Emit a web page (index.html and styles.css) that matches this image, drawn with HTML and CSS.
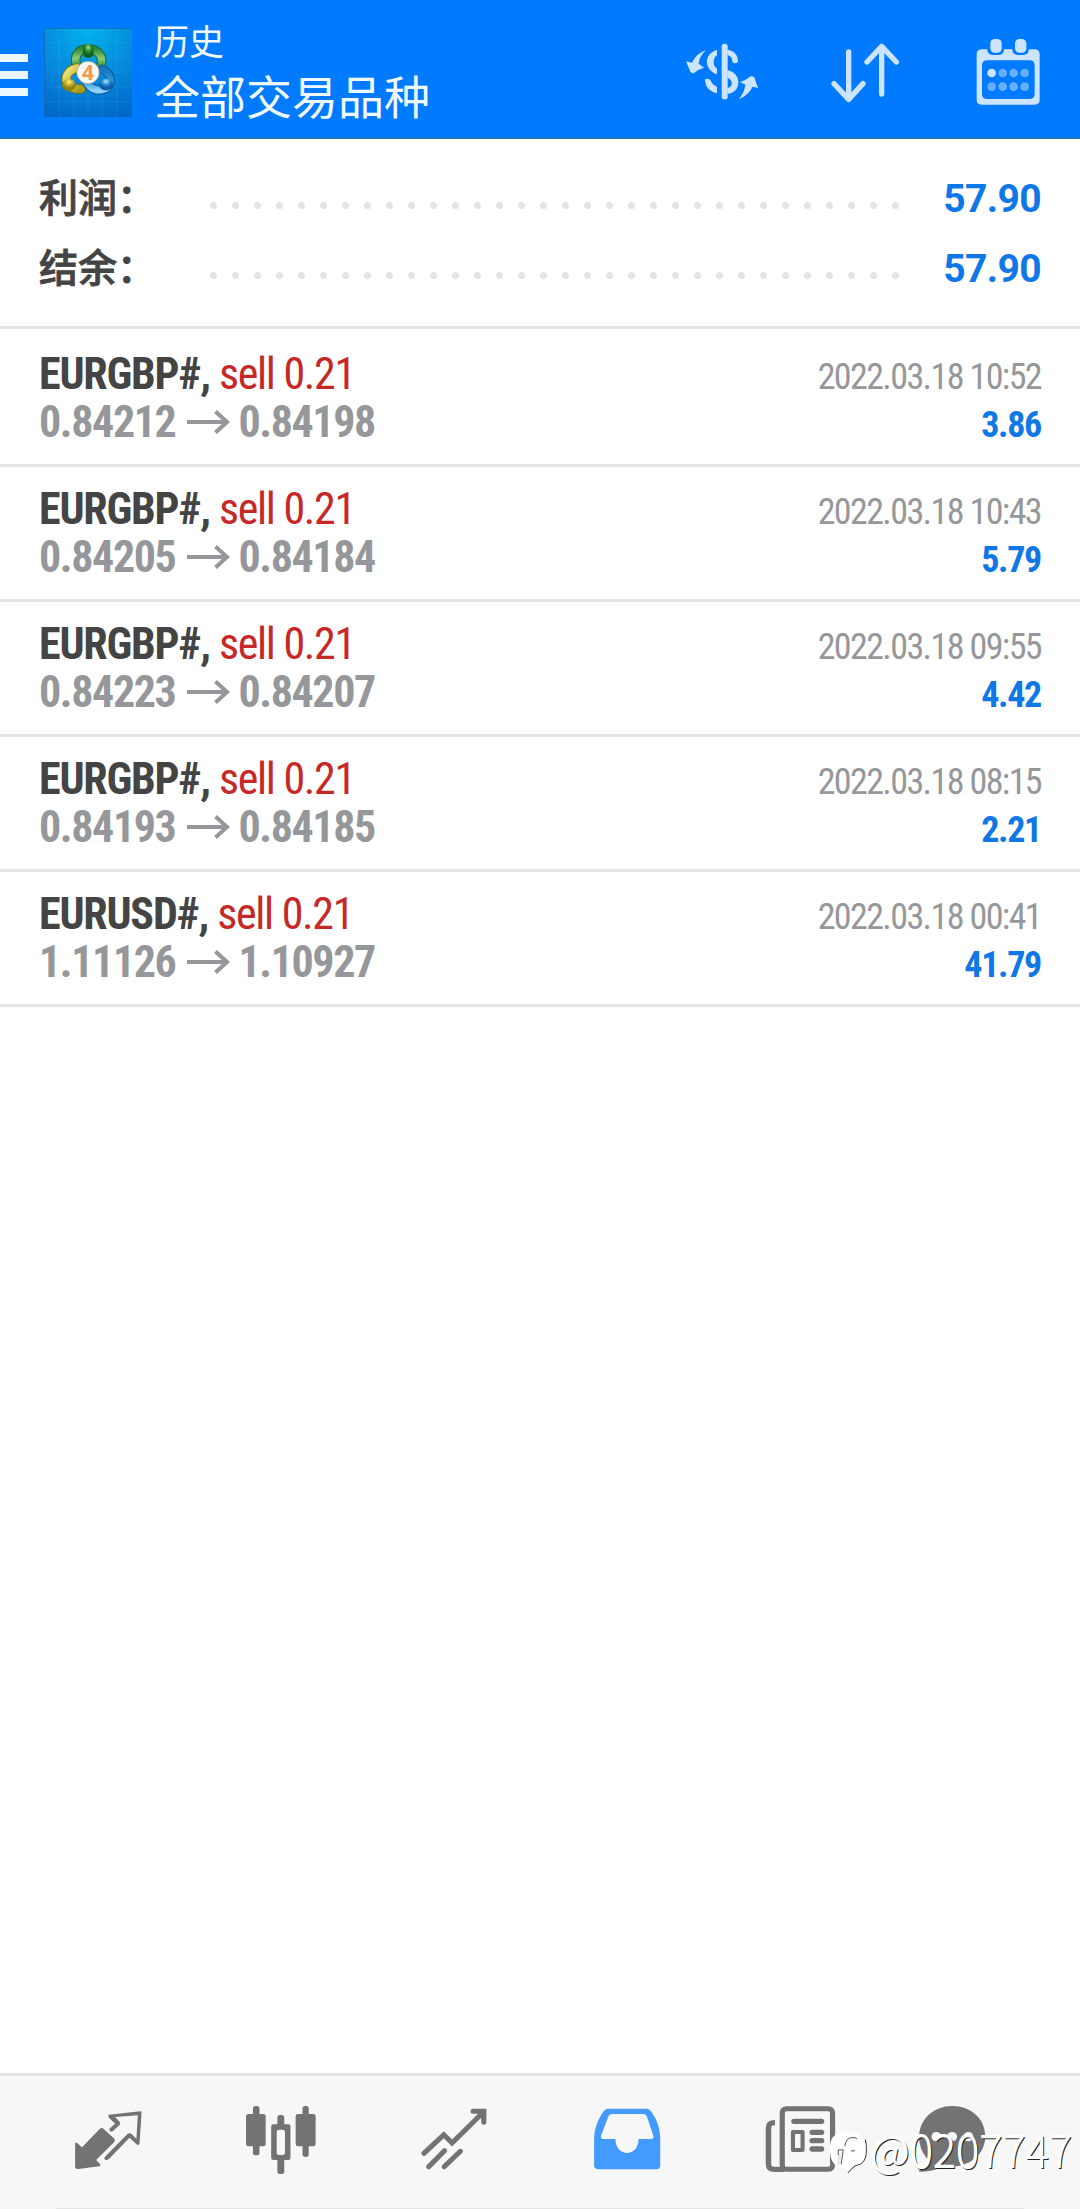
FILE: index.html
```html
<!DOCTYPE html>
<html lang="zh-CN">
<head>
<meta charset="utf-8">
<title>历史</title>
<link rel="stylesheet" href="styles.css">
</head>
<body>
<div class="app">
  <header class="topbar">
    <div class="menu"><span></span><span></span><span></span></div>
    <svg class="logo" viewBox="0 0 88 89">
      <defs>
        <radialGradient id="sky" cx="50%" cy="0%" r="105%"><stop offset="0" stop-color="#00b2ec"/><stop offset=".55" stop-color="#0589dc"/><stop offset="1" stop-color="#0068c8"/></radialGradient>
        <linearGradient id="green" x2="0" y2="1"><stop offset="0" stop-color="#2f8a38"/><stop offset=".5" stop-color="#8acb78"/><stop offset="1" stop-color="#24882e"/></linearGradient>
        <linearGradient id="gold" x2="1" y2="1"><stop offset="0" stop-color="#f3e47c"/><stop offset="1" stop-color="#a99b16"/></linearGradient>
        <linearGradient id="blue" x2="0" y2="1"><stop offset="0" stop-color="#1475be"/><stop offset=".6" stop-color="#2f97db"/><stop offset="1" stop-color="#8bd3f7"/></linearGradient>
        <radialGradient id="gHead" cy="25%"><stop offset="0" stop-color="#a8e598"/><stop offset=".5" stop-color="#35943a"/><stop offset="1" stop-color="#08661b"/></radialGradient>
        <radialGradient id="yHead" cy="25%"><stop offset="0" stop-color="#fff0a0"/><stop offset=".5" stop-color="#c7b62e"/><stop offset="1" stop-color="#8d800c"/></radialGradient>
        <radialGradient id="bHead" cy="25%"><stop offset="0" stop-color="#c2e9ff"/><stop offset=".5" stop-color="#3596d9"/><stop offset="1" stop-color="#0b5dab"/></radialGradient>
      </defs>
      <rect width="88" height="89" fill="url(#sky)"/>
      <path d="M15 0V89M29.500 0V89M44 0V89M58.500 0V89M73 0V89M0 15H88M0 30H88M0 44H88M0 59H88M0 74H88" stroke="#55bdf0" stroke-opacity=".16"/>
      <path d="M.5 89V.5H88" fill="none" stroke="#1268b8" stroke-opacity=".8"/>
      <g stroke-linecap="round" fill="none">
        <path d="M33 39C29 28 34 21 44 21S61 29 56 40" stroke="#176827" stroke-width="9.500"/>
        <path d="M33 39C29 28 34 21 44 21S61 29 56 40" stroke="url(#green)" stroke-width="7.500"/>
        <path d="M33 40C18 43 18 62 37 61" stroke="#807611" stroke-width="9.500"/>
        <path d="M33 40C18 43 18 62 37 61" stroke="url(#gold)" stroke-width="7.500"/>
        <path d="M58 41C71 47 68 61 57 62C49 63 43 57 42 53" stroke="#0b5799" stroke-width="9"/>
        <path d="M58 41C71 47 68 61 57 62C49 63 43 57 42 53" stroke="url(#blue)" stroke-width="7"/>
      </g>
      <rect x="39" y="16" width="10.500" height="14" rx="5" fill="url(#gHead)"/>
      <ellipse cx="25" cy="57" rx="7" ry="6" fill="url(#yHead)"/>
      <ellipse cx="62" cy="56.500" rx="7" ry="6" fill="url(#bHead)"/>
      <circle cx="44" cy="44.500" r="11.200" fill="#f7f7f5" stroke="#9a9a88" stroke-width=".7"/>
      <text x="44" y="51.500" text-anchor="middle" class="logo-digit">4</text>
    </svg>
    <div class="titles">
      <div class="subtitle">历史</div>
      <div class="title">全部交易品种</div>
    </div>
    <div class="actions">
      <svg viewBox="66 95 240 240">
        <g fill="#cce4ff">
          <rect x="185" y="130" width="18" height="167" rx="8"/>
          <path d="M171 149V165C158 171 158 200 171 204V222C132 209 129 160 171 149Z"/>
          <path d="M135 237Q145 233 151 239Q157 254 171 259V279Q139 272 135 243Z"/>
          <path d="M202 148C222 150 234 163 234 184Q225 194 217 184C217 173 212 166 202 165Z"/>
          <path fill-rule="evenodd" d="M202 209C223 214 235 228 235 245C235 266 222 279 202 281ZM202 232V262C219 262 221 238 202 232Z"/>
          <path d="M137 150Q118 169 116 190L132 202Q115 206 101 219Q91 219 89 209L78 183L96 187Q108 160 137 150Z"/>
          <path d="M236 297Q254 275 256 253L240 245Q258 240 272 228Q283 226 285 237L294 263L278 259Q264 286 236 297Z"/>
        </g>
      </svg>
      <svg viewBox="495 95 240 240">
        <path d="M566 155V293M522 250L566 297L609 250M665 281V140M621 185L665 138L709 185" fill="none" stroke="#cce4ff" stroke-width="16" stroke-linecap="round" stroke-linejoin="round"/>
      </svg>
      <svg viewBox="925 95 240 240">
        <path fill="#cce4ff" fill-rule="evenodd" d="M965 147H983Q983 164 1000 164H1016Q1033 164 1033 147H1058Q1058 164 1075 164H1091Q1107 164 1107 147H1126Q1140 148 1140 162V298Q1140 312 1126 313H965Q951 312 951 298V162Q951 148 965 147ZM983 180Q967 180 967 196V280Q967 296 983 296H1109Q1125 296 1125 280V196Q1125 180 1109 180Z"/>
        <rect x="992" y="116" width="34" height="41" rx="13" fill="#cce4ff"/><rect x="1066" y="116" width="34" height="41" rx="13" fill="#cce4ff"/>
        <g fill="#66afff"><circle cx="996" cy="218" r="13" fill="#cce4ff"/><circle cx="1029" cy="218" r="13"/><circle cx="1062" cy="218" r="13"/><circle cx="1095" cy="218" r="13"/><circle cx="996" cy="259" r="13"/><circle cx="1029" cy="259" r="13"/><circle cx="1062" cy="259" r="13"/><circle cx="1095" cy="259" r="13"/></g>
      </svg>
    </div>
  </header>

  <section class="summary">
    <div class="sum-row"><span class="label">利润：</span><i class="dots"></i><b class="total">57.90</b></div>
    <div class="sum-row"><span class="label">结余：</span><i class="dots"></i><b class="total">57.90</b></div>
  </section>

  <main class="deals">
    <article class="deal">
      <div class="line"><div><span class="symbol">EURGBP#,</span><span class="side">sell 0.21</span></div><time>2022.03.18 10:52</time></div>
      <div class="line"><div class="prices"><span>0.84212</span><svg class="arrow" viewBox="0 0 43 24"><path d="M0 12H40M28.500 1.500L40 12L28.500 22.500"/></svg><span>0.84198</span></div><b class="profit">3.86</b></div>
    </article>
    <article class="deal">
      <div class="line"><div><span class="symbol">EURGBP#,</span><span class="side">sell 0.21</span></div><time>2022.03.18 10:43</time></div>
      <div class="line"><div class="prices"><span>0.84205</span><svg class="arrow" viewBox="0 0 43 24"><path d="M0 12H40M28.500 1.500L40 12L28.500 22.500"/></svg><span>0.84184</span></div><b class="profit">5.79</b></div>
    </article>
    <article class="deal">
      <div class="line"><div><span class="symbol">EURGBP#,</span><span class="side">sell 0.21</span></div><time>2022.03.18 09:55</time></div>
      <div class="line"><div class="prices"><span>0.84223</span><svg class="arrow" viewBox="0 0 43 24"><path d="M0 12H40M28.500 1.500L40 12L28.500 22.500"/></svg><span>0.84207</span></div><b class="profit">4.42</b></div>
    </article>
    <article class="deal">
      <div class="line"><div><span class="symbol">EURGBP#,</span><span class="side">sell 0.21</span></div><time>2022.03.18 08:15</time></div>
      <div class="line"><div class="prices"><span>0.84193</span><svg class="arrow" viewBox="0 0 43 24"><path d="M0 12H40M28.500 1.500L40 12L28.500 22.500"/></svg><span>0.84185</span></div><b class="profit">2.21</b></div>
    </article>
    <article class="deal">
      <div class="line"><div><span class="symbol">EURUSD#,</span><span class="side">sell 0.21</span></div><time>2022.03.18 00:41</time></div>
      <div class="line"><div class="prices"><span>1.11126</span><svg class="arrow" viewBox="0 0 43 24"><path d="M0 12H40M28.500 1.500L40 12L28.500 22.500"/></svg><span>1.10927</span></div><b class="profit">41.79</b></div>
    </article>
  </main>

  <nav class="tabs">
    <svg viewBox="210 132 209 216" preserveAspectRatio="none">
      <path fill="#737373" d="M219 249Q221 246 225 249L239 262L291 206Q297 202 302 207L333 236Q337 241 332 247L280 300L291 312Q295 318 289 319L229 327Q219 328 219 321Z"/>
      <path fill="#737373" fill-rule="evenodd" d="M317 164L408 154Q412 154 412 158L406 251Q402 257 397 253L377 233L318 296Q310 303 304 297Q302 295 306 290L371 222Q377 217 383 222L397 236L401 166L335 171L349 186Q352 191 348 195L328 214Q324 217 320 213Q317 209 320 205L335 191L318 174Q313 168 317 164Z"/>
    </svg>
    <svg viewBox="712 132 209 216" preserveAspectRatio="none">
      <g fill="#737373"><rect x="735" y="138" width="19" height="148" rx="8"/><rect x="715" y="162" width="57" height="97" rx="7"/><rect x="879" y="138" width="18" height="153" rx="8"/><rect x="859" y="162" width="58" height="97" rx="7"/><rect x="806" y="165" width="20" height="40" rx="8"/><rect x="806" y="290" width="20" height="52" rx="8"/><path fill-rule="evenodd" d="M795 193H838Q844 193 844 199V294Q844 300 838 300H795Q788 300 788 294V199Q788 193 795 193ZM811 209Q804 209 804 216V278Q804 285 811 285H821Q828 285 828 278V216Q828 209 821 209Z"/></g>
    </svg>
    <svg viewBox="1214 132 209 216" preserveAspectRatio="none">
      <path d="M1231 280L1289 224L1313 249L1404 156M1374 154H1405V187M1245 320L1291 272M1290 320L1337 274" fill="none" stroke="#737373" stroke-width="15" stroke-linecap="round"/>
    </svg>
    <svg viewBox="149 132 209 216" preserveAspectRatio="none">
      <path fill="#449bff" fill-rule="evenodd" d="M198 146H310Q318 146 322 152C342 180 350 208 350 238V316Q350 328 338 328H170Q158 328 158 316V238C158 208 168 178 187 152Q191 146 198 146ZM210 162Q203 162 200 168L178 227Q176 237 187 237H220C220 293 287 293 287 237H321Q333 237 330 227L311 169Q308 162 301 162Z"/>
    </svg>
    <svg viewBox="652 132 209 216" preserveAspectRatio="none">
      <g fill="none" stroke="#737373"><rect x="705" y="146" width="146" height="182" rx="12" stroke-width="15"/><path d="M684 188Q665 188 665 203V313Q665 328 682 328H710" stroke-width="16"/><rect x="736" y="216" width="28" height="54" stroke-width="12" stroke-linejoin="round"/><path d="M739 184H819M792 217H819M792 242H819M792 267H819" stroke-width="16" stroke-linecap="round"/></g>
    </svg>
    <svg class="chat" viewBox="1094 132 209 216" preserveAspectRatio="none">
      <path fill="#737373" d="M1199 138C1254 138 1295 177 1295 229C1295 285 1248 321 1190 321L1172 319Q1142 337 1104 335Q1100 331 1106 327Q1127 317 1130 300C1112 280 1103 257 1103 231C1103 179 1144 138 1199 138Z"/>
      <g fill="#f7f7f7"><circle cx="1153" cy="230" r="14"/><circle cx="1199" cy="230" r="14"/><circle cx="1246" cy="230" r="14"/></g>
    </svg>
  </nav>
  <div class="watermark">
    <svg viewBox="45 35 115 130">
      <path fill="none" stroke="#222" stroke-width="3" d="M152 58Q155 70 155 88C155 121 145 132 123 136Q109 146 99 159"/>
      <path fill="#fff" d="M99 36C139 36 153 51 153 86C153 121 143 132 121 134Q105 144 99 157Q95 157 96 144C58 144 45 125 45 88C45 49 60 36 99 36Z"/>
      <path fill="none" stroke="#333" stroke-width="2.500" d="M90 78Q93 53 111 52Q123 50 127 56M70 89H85L79 133M70 89V106M108 92H121"/>
      <path fill="#e9e9e9" d="M70 107L80 94L77 130L66 141Z"/>
    </svg>
    <span>@0207747</span>
  </div>
</div>
</body>
</html>
```
FILE: styles.css
```css
* { box-sizing: border-box; }
body { margin: 0; background: #fff; }
.app {
  position: relative;
  display: flex;
  flex-direction: column;
  width: 1080px;
  height: 2209px;
  overflow: hidden;
  font-family: "Roboto Condensed", Roboto, "Noto Sans CJK SC", sans-serif;
}
svg { display: block; flex: none; }

.topbar {
  display: flex;
  align-items: flex-start;
  height: 139px;
  background: #007aff;
  border-bottom: 2px solid #1a73bd;
}
.menu { display: flex; flex-direction: column; gap: 9px; width: 28px; padding-top: 54px; }
.menu span { height: 8px; background: #ebf7ff; }
.logo { width: 88px; height: 89px; margin: 28px 0 0 16px; }
.logo-digit { font: 700 21px "Open Sans", sans-serif; fill: #f29a4a; }
.titles { margin: 17px 0 0 22px; color: #f0faff; font-family: "Noto Sans CJK SC", sans-serif; white-space: nowrap; }
.subtitle { font-size: 35px; line-height: 46px; }
.title { font-size: 46px; line-height: 62px; }
.actions { display: flex; gap: 63.300px; margin-left: auto; padding: 31.700px 31.700px 0 0; }
.actions svg { width: 80px; height: 80px; }

.summary { height: 190px; padding: 21px 39px 0; border-bottom: 3px solid #e4e4e4; }
.sum-row { display: flex; align-items: center; height: 70px; }
.label { width: 171px; color: #444; font: 500 39px/56px "Noto Sans CJK SC", sans-serif; -webkit-text-stroke: .8px #444; white-space: nowrap; }
.dots {
  width: 704px;
  height: 7px;
  margin-top: 21px;
  background: radial-gradient(circle at 3.500px 3.500px, #e4e4e4 3.200px, transparent 3.800px) 0 0 / 22px 7px repeat-x;
}
.total { margin: 8px 0 0 auto; color: #0f77e6; font: 700 39px/56px Roboto, sans-serif; letter-spacing: -.6px; }

.deals { flex: 1; padding-top: 3px; }
.deal { height: 135px; padding: 18px 39px 0 39px; border-bottom: 3px solid #e4e4e4; }
.line { display: flex; justify-content: space-between; align-items: baseline; height: 48px; font-size: 44px; line-height: 48px; white-space: nowrap; }
.symbol { color: #444; font-weight: 700; letter-spacing: -1.200px; }
.side { margin-left: 9px; color: #c62828; letter-spacing: -1.300px; }
.deal time { color: #96979a; font-size: 36px; letter-spacing: -1.600px; }
.prices { display: flex; align-items: baseline; color: #96979a; font-weight: 700; letter-spacing: -1.400px; }
.arrow { width: 43px; height: 24px; margin: 0 8px 0 12px; align-self: center; }
.arrow path { fill: none; stroke: #96979a; stroke-width: 4px; }
.profit { color: #0f77e6; font-size: 36px; letter-spacing: -1.300px; }

.tabs {
  display: flex;
  gap: 101px;
  height: 136px;
  padding: 28px 0 0 72px;
  background: linear-gradient(#e4e4e4, #e4e4e4) 56px 100% / 968px 1px no-repeat, #f7f7f7;
  border-top: 3px solid #e4e4e4;
}
.tabs svg { width: 72px; height: 72px; }
.tabs .chat { margin-left: -21px; }

.watermark { position: absolute; left: 830px; top: 2132px; display: flex; align-items: flex-start; color: #fff; }
.watermark svg { width: 38px; height: 43px; }
.watermark span {
  margin: -12px 0 0 2px;
  font: 300 43.300px/56px "Noto Sans CJK SC", sans-serif;
  text-shadow: .5px .5px 0 #fff, 1.500px 1.500px 0 #222;
}
```
